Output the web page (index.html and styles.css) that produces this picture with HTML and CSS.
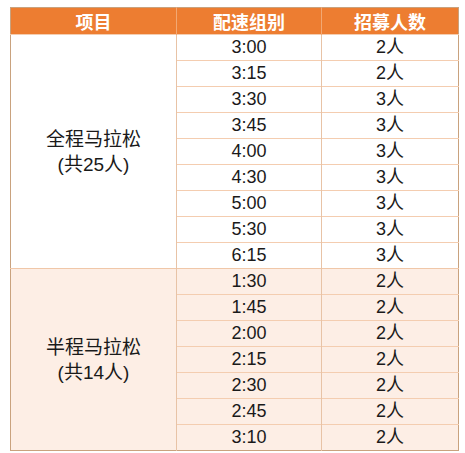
FILE: index.html
```html
<!DOCTYPE html>
<html lang="zh">
<head>
<meta charset="utf-8">
<link rel="stylesheet" href="styles.css">
</head>
<body>
<table class="pace">
  <thead>
    <tr><th class="c1">项目</th><th class="c2">配速组别</th><th class="c3">招募人数</th></tr>
  </thead>
  <tbody class="full">
    <tr><td class="event" rowspan="9">全程马拉松<br>(共25人)</td><td>3:00</td><td>2人</td></tr>
    <tr><td>3:15</td><td>2人</td></tr>
    <tr><td>3:30</td><td>3人</td></tr>
    <tr><td>3:45</td><td>3人</td></tr>
    <tr><td>4:00</td><td>3人</td></tr>
    <tr><td>4:30</td><td>3人</td></tr>
    <tr><td>5:00</td><td>3人</td></tr>
    <tr><td>5:30</td><td>3人</td></tr>
    <tr><td>6:15</td><td>3人</td></tr>
  </tbody>
  <tbody class="half">
    <tr><td class="event" rowspan="7">半程马拉松<br>(共14人)</td><td>1:30</td><td>2人</td></tr>
    <tr><td>1:45</td><td>2人</td></tr>
    <tr><td>2:00</td><td>2人</td></tr>
    <tr><td>2:15</td><td>2人</td></tr>
    <tr><td>2:30</td><td>2人</td></tr>
    <tr><td>2:45</td><td>2人</td></tr>
    <tr><td>3:10</td><td>2人</td></tr>
  </tbody>
</table>
</body>
</html>
```
FILE: styles.css
```css
html, body {
  margin: 0;
  padding: 0;
  background: #ffffff;
}
body {
  padding: 7px 0 0 10px;
  font-family: "Liberation Sans", "Noto Sans CJK SC", sans-serif;
  color: #1a1a1a;
}
.pace {
  border-collapse: collapse;
  table-layout: fixed;
  width: 446px;
  border: 1px solid #c9a27e;
}
.pace th {
  background: #ed7d31;
  color: #ffffff;
  font-weight: bold;
  font-size: 18px;
  height: 26px;
  padding: 0;
  line-height: 26px;
  border-left: 1px solid #f2a873;
  font-family: "Noto Sans CJK SC", sans-serif;
}
.pace th.c1 { width: 165px; border-left: none; }
.pace th.c2 { width: 144px; }
.pace th.c3 { width: 136px; }
.pace td {
  height: 25px;
  padding: 0;
  text-align: center;
  font-size: 18px;
  line-height: 25px;
  font-weight: normal;
  border-top: 1px solid #f4cdb0;
  border-left: 1px solid #e8c3a6;
}
.pace td.event {
  border-left: none;
  line-height: 25px;
  font-size: 19px;
}
.half td {
  background: #fdeee5;
}
.half tr:first-child td {
  border-top: 1px solid #f0c7a8;
}
```
